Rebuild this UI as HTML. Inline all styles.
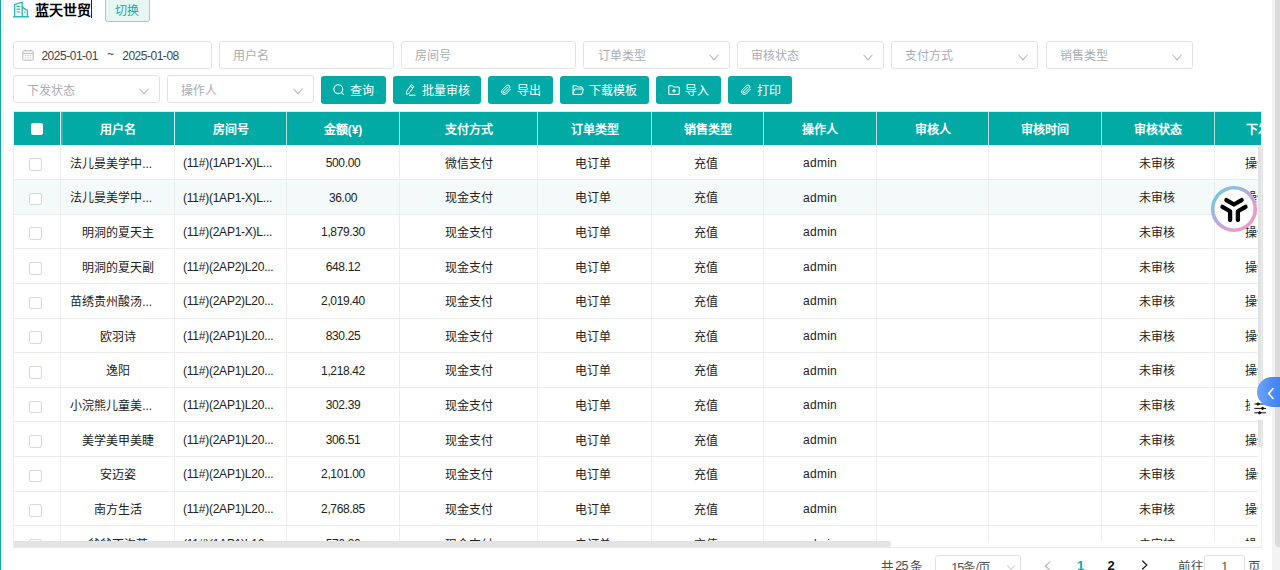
<!DOCTYPE html>
<html lang="zh-CN"><head><meta charset="utf-8"><title>订单审核</title><style>
*{box-sizing:border-box;margin:0;padding:0}
html,body{width:1280px;height:570px;overflow:hidden;background:#fff}
body{position:relative;font-family:"Liberation Sans", sans-serif;font-size:12px;color:#222}
.a{position:absolute}
.inp{position:absolute;border:1px solid #e3e3e6;border-radius:3px;background:#fff;height:27.6px}
.ph{position:absolute;left:13.2px;top:1.7px;line-height:26px;color:#a9acb3;font-size:12px;white-space:nowrap}
.chev{position:absolute;right:9.3px;top:12.2px;width:10px;height:7px}
.btn{position:absolute;top:76px;height:27.8px;background:#02aaa6;border-radius:3px;color:#fff;font-size:12px;line-height:27.8px;white-space:nowrap}
.btn svg{position:absolute}
.btn span{position:absolute;top:1.6px}
.th{position:absolute;top:113.9px;height:31px;line-height:33.7px;color:#fff;font-weight:bold;font-size:12px;text-align:center;white-space:nowrap;overflow:hidden}
.td{position:absolute;height:34.62px;line-height:34.62px;font-size:12px;text-align:center;white-space:nowrap;overflow:hidden;color:#222}
.vl{position:absolute;width:1px}
.hl{position:absolute;height:1px;background:#ececec}
.cb{position:absolute;width:12.6px;height:12.6px;border:1px solid #d5d8de;border-radius:2px;background:#fff}
</style></head><body>
<div class="a" style="left:0;top:0;width:1px;height:570px;background:#17a0ae"></div>
<div class="a" style="left:1px;top:0;width:1px;height:570px;background:#fbf9f8"></div>
<div class="a" style="left:2px;top:0;width:2px;height:570px;background:#f4f4f4"></div>
<svg class="a" style="left:13px;top:1px;width:16px;height:17px" viewBox="0 0 16 17" fill="none" stroke="#2fb9b4" stroke-width="1.4" stroke-linejoin="round" stroke-linecap="round">
<path d="M1.6 15.6V3.6L9.2 1.2V15.6"/><path d="M9.4 6.2L14.4 9.6V15.6"/><path d="M0.4 15.8H15.6"/>
<path d="M4 5.4H6.8M4 8.2H6.8M4 11H6.8" stroke-width="1.2"/><path d="M11.4 11.2H12.2" stroke-width="1"/></svg>
<div class="a" style="left:35px;top:0;height:20px;line-height:20px;font-size:14px;font-weight:bold;color:#000;white-space:nowrap">蓝天世贸</div>
<div class="a" style="left:91px;top:0;width:1px;height:18px;background:#222"></div>
<div class="a" style="left:105px;top:-6px;width:44.7px;height:27.8px;border:1px solid #86d3d0;border-radius:2.5px;background:#e6f6f5;color:#12aaa6;font-size:12px;line-height:32.6px;text-align:center">切换</div>
<div class="inp" style="left:13px;top:41.1px;width:198.8px"><svg class="a" style="left:8px;top:7px;width:12px;height:12px" viewBox="0 0 12 12" fill="none" stroke="#b9bcc3" stroke-width="1"><rect x="0.8" y="1.8" width="10.4" height="9.4" rx="0.8"/><path d="M0.8 4.4H11.2M3.4 0.6V2.6M8.6 0.6V2.6"/><path d="M2.8 6.6H9.2M2.8 8.8H9.2" stroke-dasharray="1.4 1" stroke-width="0.9"/></svg><div class="a" style="left:27.4px;top:1.3px;line-height:26.5px;font-size:12px;color:#3f434a;white-space:nowrap;letter-spacing:-0.48px">2025-01-01</div><div class="a" style="left:93px;top:0.4px;line-height:25px;font-size:12px;color:#3f434a">~</div><div class="a" style="left:108.2px;top:1.3px;line-height:26.5px;font-size:12px;color:#3f434a;white-space:nowrap;letter-spacing:-0.48px">2025-01-08</div></div>
<div class="inp" style="left:218.75px;top:41.1px;width:175.00px"><div class="ph" style="top:0.8px">用户名</div></div>
<div class="inp" style="left:401px;top:41.1px;width:175.00px"><div class="ph" style="top:0.8px">房间号</div></div>
<div class="inp" style="left:583.4px;top:41.1px;width:146.40px"><div class="ph" style="top:0.8px">订单类型</div><svg class="chev" viewBox="0 0 10 7" fill="none" stroke="#b4b8bf" stroke-width="1.1" stroke-linecap="round" stroke-linejoin="round"><path d="M0.8 1L5 5.8L9.2 1"/></svg></div>
<div class="inp" style="left:737px;top:41.1px;width:146.70px"><div class="ph" style="top:0.8px">审核状态</div><svg class="chev" viewBox="0 0 10 7" fill="none" stroke="#b4b8bf" stroke-width="1.1" stroke-linecap="round" stroke-linejoin="round"><path d="M0.8 1L5 5.8L9.2 1"/></svg></div>
<div class="inp" style="left:891px;top:41.1px;width:147.20px"><div class="ph" style="top:0.8px">支付方式</div><svg class="chev" viewBox="0 0 10 7" fill="none" stroke="#b4b8bf" stroke-width="1.1" stroke-linecap="round" stroke-linejoin="round"><path d="M0.8 1L5 5.8L9.2 1"/></svg></div>
<div class="inp" style="left:1045.7px;top:41.1px;width:146.90px"><div class="ph" style="top:0.8px">销售类型</div><svg class="chev" viewBox="0 0 10 7" fill="none" stroke="#b4b8bf" stroke-width="1.1" stroke-linecap="round" stroke-linejoin="round"><path d="M0.8 1L5 5.8L9.2 1"/></svg></div>
<div class="inp" style="left:13px;top:75.2px;width:146.50px"><div class="ph" style="top:1.7px">下发状态</div><svg class="chev" viewBox="0 0 10 7" fill="none" stroke="#b4b8bf" stroke-width="1.1" stroke-linecap="round" stroke-linejoin="round"><path d="M0.8 1L5 5.8L9.2 1"/></svg></div>
<div class="inp" style="left:167px;top:75.2px;width:146.75px"><div class="ph" style="top:1.7px">操作人</div><svg class="chev" viewBox="0 0 10 7" fill="none" stroke="#b4b8bf" stroke-width="1.1" stroke-linecap="round" stroke-linejoin="round"><path d="M0.8 1L5 5.8L9.2 1"/></svg></div>
<div class="btn" style="left:321px;width:64.80px"><svg style="left:12px;top:8px;width:12px;height:12px" viewBox="0 0 12 12" fill="none" stroke="#fff" stroke-width="1.1" stroke-linecap="round"><circle cx="5.3" cy="5.2" r="4.4"/><path d="M8.6 8.6L10.4 10.4"/></svg><span style="left:28.8px">查询</span></div>
<div class="btn" style="left:392.8px;width:88.20px"><svg style="left:11.5px;top:8px;width:12px;height:12px" viewBox="0 0 12 12" fill="none" stroke="#fff" stroke-width="1" stroke-linecap="round" stroke-linejoin="round"><path d="M7.6 1L9.8 2.6L5 9.4L2.4 10.4L2.6 7.8Z"/><path d="M6.6 2.4L8.8 4"/><path d="M5.4 11.2H11.2"/></svg><span style="left:28.8px">批量审核</span></div>
<div class="btn" style="left:488.1px;width:64.70px"><svg style="left:12px;top:8px;width:12px;height:12px" viewBox="0 0 12 12" fill="none" stroke="#fff" stroke-width="1" stroke-linecap="round" stroke-linejoin="round"><path d="M10.6 5.2L6 9.8A2.7 2.7 0 0 1 2.2 6L6.6 1.6A1.9 1.9 0 0 1 9.3 4.3L5 8.6A1 1 0 0 1 3.5 7.2L7.6 3.1"/></svg><span style="left:28.8px">导出</span></div>
<div class="btn" style="left:560.2px;width:88.80px"><svg style="left:12px;top:8px;width:12px;height:12px" viewBox="0 0 12 12" fill="none" stroke="#fff" stroke-width="1" stroke-linejoin="round"><path d="M1 10.4V1.8H4.6L5.6 3H10V5"/><path d="M1 10.4L2.6 5H11.4L9.8 10.4Z"/></svg><span style="left:28.8px">下载模板</span></div>
<div class="btn" style="left:656.1px;width:64.70px"><svg style="left:12px;top:8px;width:12px;height:12px" viewBox="0 0 12 12" fill="none" stroke="#fff" stroke-width="1" stroke-linejoin="round"><path d="M0.8 1.8H4.6L5.6 3H11.2V10.4H0.8Z"/><path d="M6 5V8.6M4.2 6.8H7.8" stroke-width="1.2"/></svg><span style="left:28.8px">导入</span></div>
<div class="btn" style="left:728px;width:64.30px"><svg style="left:12px;top:8px;width:12px;height:12px" viewBox="0 0 12 12" fill="none" stroke="#fff" stroke-width="1" stroke-linecap="round" stroke-linejoin="round"><path d="M10.6 5.2L6 9.8A2.7 2.7 0 0 1 2.2 6L6.6 1.6A1.9 1.9 0 0 1 9.3 4.3L5 8.6A1 1 0 0 1 3.5 7.2L7.6 3.1"/></svg><span style="left:28.8px">打印</span></div>
<div class="a" id="tb" style="left:0;top:0;width:1263.0px;height:548px;overflow:hidden">
<div class="a" style="left:13px;top:111px;width:1249.4px;height:1px;background:#d6efee"></div>
<div class="a" style="left:14px;top:112px;width:1248.4px;height:33.0px;background:#02aaa6"></div>
<div class="a" style="left:14px;top:179.62px;width:1244.4px;height:34.62px;background:#f4fafa"></div>
<div class="th" style="left:61px;width:113px">用户名</div>
<div class="th" style="left:175px;width:111px">房间号</div>
<div class="th" style="left:287px;width:112px">金额(¥)</div>
<div class="th" style="left:400px;width:137px">支付方式</div>
<div class="th" style="left:538px;width:113px">订单类型</div>
<div class="th" style="left:652px;width:111px">销售类型</div>
<div class="th" style="left:764px;width:112px">操作人</div>
<div class="th" style="left:877px;width:111px">审核人</div>
<div class="th" style="left:989px;width:112px">审核时间</div>
<div class="th" style="left:1102px;width:112px">审核状态</div>
<div class="th" style="left:1214.3px;width:112px">下发状态</div>
<div class="a" style="left:31px;top:123.2px;width:12.4px;height:12.2px;background:#fff;border-radius:2px"></div>
<div class="a" style="left:0;top:145.0px;width:1258px;height:396.20px;overflow:hidden">
<div class="td" style="left:70.2px;top:1.70px;width:100px;text-align:left">法儿曼美学中...</div>
<div class="td" style="left:183px;top:0.90px;width:100px;text-align:left;letter-spacing:-0.24px">(11#)(1AP1-X)L...</div>
<div class="td" style="left:287px;top:0.90px;width:112px;letter-spacing:-0.36px">500.00</div>
<div class="td" style="left:400px;top:1.70px;width:137px">微信支付</div>
<div class="td" style="left:536.7px;top:1.70px;width:113px">电订单</div>
<div class="td" style="left:650.7px;top:1.70px;width:111px">充值</div>
<div class="td" style="left:764px;top:0.90px;width:112px;letter-spacing:0.25px">admin</div>
<div class="td" style="left:1101.4px;top:1.70px;width:112px">未审核</div>
<div class="td" style="left:1213.3px;top:1.70px;width:112px">操作成功</div>
<div class="cb" style="left:29.2px;top:13.20px"></div>
<div class="hl" style="left:14px;top:34px;width:1244px"></div>
<div class="td" style="left:70.2px;top:36.32px;width:100px;text-align:left">法儿曼美学中...</div>
<div class="td" style="left:183px;top:35.52px;width:100px;text-align:left;letter-spacing:-0.24px">(11#)(1AP1-X)L...</div>
<div class="td" style="left:287px;top:35.52px;width:112px;letter-spacing:-0.36px">36.00</div>
<div class="td" style="left:400px;top:36.32px;width:137px">现金支付</div>
<div class="td" style="left:536.7px;top:36.32px;width:113px">电订单</div>
<div class="td" style="left:650.7px;top:36.32px;width:111px">充值</div>
<div class="td" style="left:764px;top:35.52px;width:112px;letter-spacing:0.25px">admin</div>
<div class="td" style="left:1101.4px;top:36.32px;width:112px">未审核</div>
<div class="td" style="left:1213.3px;top:36.32px;width:112px">操作成功</div>
<div class="cb" style="left:29.2px;top:47.82px"></div>
<div class="hl" style="left:14px;top:69px;width:1244px"></div>
<div class="td" style="left:61px;top:70.94px;width:113px">明洞的夏天主</div>
<div class="td" style="left:183px;top:70.14px;width:100px;text-align:left;letter-spacing:-0.24px">(11#)(2AP1-X)L...</div>
<div class="td" style="left:287px;top:70.14px;width:112px;letter-spacing:-0.36px">1,879.30</div>
<div class="td" style="left:400px;top:70.94px;width:137px">现金支付</div>
<div class="td" style="left:536.7px;top:70.94px;width:113px">电订单</div>
<div class="td" style="left:650.7px;top:70.94px;width:111px">充值</div>
<div class="td" style="left:764px;top:70.14px;width:112px;letter-spacing:0.25px">admin</div>
<div class="td" style="left:1101.4px;top:70.94px;width:112px">未审核</div>
<div class="td" style="left:1213.3px;top:70.94px;width:112px">操作成功</div>
<div class="cb" style="left:29.2px;top:82.44px"></div>
<div class="hl" style="left:14px;top:103px;width:1244px"></div>
<div class="td" style="left:61px;top:105.56px;width:113px">明洞的夏天副</div>
<div class="td" style="left:183px;top:104.76px;width:100px;text-align:left;letter-spacing:-0.24px">(11#)(2AP2)L20...</div>
<div class="td" style="left:287px;top:104.76px;width:112px;letter-spacing:-0.36px">648.12</div>
<div class="td" style="left:400px;top:105.56px;width:137px">现金支付</div>
<div class="td" style="left:536.7px;top:105.56px;width:113px">电订单</div>
<div class="td" style="left:650.7px;top:105.56px;width:111px">充值</div>
<div class="td" style="left:764px;top:104.76px;width:112px;letter-spacing:0.25px">admin</div>
<div class="td" style="left:1101.4px;top:105.56px;width:112px">未审核</div>
<div class="td" style="left:1213.3px;top:105.56px;width:112px">操作成功</div>
<div class="cb" style="left:29.2px;top:117.06px"></div>
<div class="hl" style="left:14px;top:138px;width:1244px"></div>
<div class="td" style="left:70.2px;top:140.18px;width:100px;text-align:left">苗绣贵州酸汤...</div>
<div class="td" style="left:183px;top:139.38px;width:100px;text-align:left;letter-spacing:-0.24px">(11#)(2AP2)L20...</div>
<div class="td" style="left:287px;top:139.38px;width:112px;letter-spacing:-0.36px">2,019.40</div>
<div class="td" style="left:400px;top:140.18px;width:137px">现金支付</div>
<div class="td" style="left:536.7px;top:140.18px;width:113px">电订单</div>
<div class="td" style="left:650.7px;top:140.18px;width:111px">充值</div>
<div class="td" style="left:764px;top:139.38px;width:112px;letter-spacing:0.25px">admin</div>
<div class="td" style="left:1101.4px;top:140.18px;width:112px">未审核</div>
<div class="td" style="left:1213.3px;top:140.18px;width:112px">操作成功</div>
<div class="cb" style="left:29.2px;top:151.68px"></div>
<div class="hl" style="left:14px;top:173px;width:1244px"></div>
<div class="td" style="left:61px;top:174.80px;width:113px">欧羽诗</div>
<div class="td" style="left:183px;top:174.00px;width:100px;text-align:left;letter-spacing:-0.24px">(11#)(2AP1)L20...</div>
<div class="td" style="left:287px;top:174.00px;width:112px;letter-spacing:-0.36px">830.25</div>
<div class="td" style="left:400px;top:174.80px;width:137px">现金支付</div>
<div class="td" style="left:536.7px;top:174.80px;width:113px">电订单</div>
<div class="td" style="left:650.7px;top:174.80px;width:111px">充值</div>
<div class="td" style="left:764px;top:174.00px;width:112px;letter-spacing:0.25px">admin</div>
<div class="td" style="left:1101.4px;top:174.80px;width:112px">未审核</div>
<div class="td" style="left:1213.3px;top:174.80px;width:112px">操作成功</div>
<div class="cb" style="left:29.2px;top:186.30px"></div>
<div class="hl" style="left:14px;top:207px;width:1244px"></div>
<div class="td" style="left:61px;top:209.42px;width:113px">逸阳</div>
<div class="td" style="left:183px;top:208.62px;width:100px;text-align:left;letter-spacing:-0.24px">(11#)(2AP1)L20...</div>
<div class="td" style="left:287px;top:208.62px;width:112px;letter-spacing:-0.36px">1,218.42</div>
<div class="td" style="left:400px;top:209.42px;width:137px">现金支付</div>
<div class="td" style="left:536.7px;top:209.42px;width:113px">电订单</div>
<div class="td" style="left:650.7px;top:209.42px;width:111px">充值</div>
<div class="td" style="left:764px;top:208.62px;width:112px;letter-spacing:0.25px">admin</div>
<div class="td" style="left:1101.4px;top:209.42px;width:112px">未审核</div>
<div class="td" style="left:1213.3px;top:209.42px;width:112px">操作成功</div>
<div class="cb" style="left:29.2px;top:220.92px"></div>
<div class="hl" style="left:14px;top:242px;width:1244px"></div>
<div class="td" style="left:70.2px;top:244.04px;width:100px;text-align:left">小浣熊儿童美...</div>
<div class="td" style="left:183px;top:243.24px;width:100px;text-align:left;letter-spacing:-0.24px">(11#)(2AP1)L20...</div>
<div class="td" style="left:287px;top:243.24px;width:112px;letter-spacing:-0.36px">302.39</div>
<div class="td" style="left:400px;top:244.04px;width:137px">现金支付</div>
<div class="td" style="left:536.7px;top:244.04px;width:113px">电订单</div>
<div class="td" style="left:650.7px;top:244.04px;width:111px">充值</div>
<div class="td" style="left:764px;top:243.24px;width:112px;letter-spacing:0.25px">admin</div>
<div class="td" style="left:1101.4px;top:244.04px;width:112px">未审核</div>
<div class="td" style="left:1213.3px;top:244.04px;width:112px">操作成功</div>
<div class="cb" style="left:29.2px;top:255.54px"></div>
<div class="hl" style="left:14px;top:276px;width:1244px"></div>
<div class="td" style="left:61px;top:278.66px;width:113px">美学美甲美睫</div>
<div class="td" style="left:183px;top:277.86px;width:100px;text-align:left;letter-spacing:-0.24px">(11#)(2AP1)L20...</div>
<div class="td" style="left:287px;top:277.86px;width:112px;letter-spacing:-0.36px">306.51</div>
<div class="td" style="left:400px;top:278.66px;width:137px">现金支付</div>
<div class="td" style="left:536.7px;top:278.66px;width:113px">电订单</div>
<div class="td" style="left:650.7px;top:278.66px;width:111px">充值</div>
<div class="td" style="left:764px;top:277.86px;width:112px;letter-spacing:0.25px">admin</div>
<div class="td" style="left:1101.4px;top:278.66px;width:112px">未审核</div>
<div class="td" style="left:1213.3px;top:278.66px;width:112px">操作成功</div>
<div class="cb" style="left:29.2px;top:290.16px"></div>
<div class="hl" style="left:14px;top:311px;width:1244px"></div>
<div class="td" style="left:61px;top:313.28px;width:113px">安迈姿</div>
<div class="td" style="left:183px;top:312.48px;width:100px;text-align:left;letter-spacing:-0.24px">(11#)(2AP1)L20...</div>
<div class="td" style="left:287px;top:312.48px;width:112px;letter-spacing:-0.36px">2,101.00</div>
<div class="td" style="left:400px;top:313.28px;width:137px">现金支付</div>
<div class="td" style="left:536.7px;top:313.28px;width:113px">电订单</div>
<div class="td" style="left:650.7px;top:313.28px;width:111px">充值</div>
<div class="td" style="left:764px;top:312.48px;width:112px;letter-spacing:0.25px">admin</div>
<div class="td" style="left:1101.4px;top:313.28px;width:112px">未审核</div>
<div class="td" style="left:1213.3px;top:313.28px;width:112px">操作成功</div>
<div class="cb" style="left:29.2px;top:324.78px"></div>
<div class="hl" style="left:14px;top:346px;width:1244px"></div>
<div class="td" style="left:61px;top:347.90px;width:113px">南方生活</div>
<div class="td" style="left:183px;top:347.10px;width:100px;text-align:left;letter-spacing:-0.24px">(11#)(2AP1)L20...</div>
<div class="td" style="left:287px;top:347.10px;width:112px;letter-spacing:-0.36px">2,768.85</div>
<div class="td" style="left:400px;top:347.90px;width:137px">现金支付</div>
<div class="td" style="left:536.7px;top:347.90px;width:113px">电订单</div>
<div class="td" style="left:650.7px;top:347.90px;width:111px">充值</div>
<div class="td" style="left:764px;top:347.10px;width:112px;letter-spacing:0.25px">admin</div>
<div class="td" style="left:1101.4px;top:347.90px;width:112px">未审核</div>
<div class="td" style="left:1213.3px;top:347.90px;width:112px">操作成功</div>
<div class="cb" style="left:29.2px;top:359.40px"></div>
<div class="hl" style="left:14px;top:380px;width:1244px"></div>
<div class="td" style="left:61px;top:382.52px;width:113px">爸爸不泡茶</div>
<div class="td" style="left:183px;top:381.72px;width:100px;text-align:left;letter-spacing:-0.24px">(11#)(1AP1)L10...</div>
<div class="td" style="left:287px;top:381.72px;width:112px;letter-spacing:-0.36px">576.20</div>
<div class="td" style="left:400px;top:382.52px;width:137px">现金支付</div>
<div class="td" style="left:536.7px;top:382.52px;width:113px">电订单</div>
<div class="td" style="left:650.7px;top:382.52px;width:111px">充值</div>
<div class="td" style="left:764px;top:381.72px;width:112px;letter-spacing:0.25px">admin</div>
<div class="td" style="left:1101.4px;top:382.52px;width:112px">未审核</div>
<div class="td" style="left:1213.3px;top:382.52px;width:112px">操作成功</div>
<div class="cb" style="left:29.2px;top:394.02px"></div>
<div class="hl" style="left:14px;top:415px;width:1244px"></div>
</div>
<div class="vl" style="left:60px;top:112px;height:33.0px;background:#dfe8e8"></div>
<div class="vl" style="left:60px;top:145.0px;height:396.20px;background:#ededee"></div>
<div class="vl" style="left:174px;top:112px;height:33.0px;background:#dfe8e8"></div>
<div class="vl" style="left:174px;top:145.0px;height:396.20px;background:#ededee"></div>
<div class="vl" style="left:286px;top:112px;height:33.0px;background:#b8dfdd"></div>
<div class="vl" style="left:286px;top:145.0px;height:396.20px;background:#ededee"></div>
<div class="vl" style="left:399px;top:112px;height:33.0px;background:#b8dfdd"></div>
<div class="vl" style="left:399px;top:145.0px;height:396.20px;background:#ededee"></div>
<div class="vl" style="left:537px;top:112px;height:33.0px;background:#b8dfdd"></div>
<div class="vl" style="left:537px;top:145.0px;height:396.20px;background:#ededee"></div>
<div class="vl" style="left:651px;top:112px;height:33.0px;background:#b8dfdd"></div>
<div class="vl" style="left:651px;top:145.0px;height:396.20px;background:#ededee"></div>
<div class="vl" style="left:763px;top:112px;height:33.0px;background:#b8dfdd"></div>
<div class="vl" style="left:763px;top:145.0px;height:396.20px;background:#ededee"></div>
<div class="vl" style="left:876px;top:112px;height:33.0px;background:#b8dfdd"></div>
<div class="vl" style="left:876px;top:145.0px;height:396.20px;background:#ededee"></div>
<div class="vl" style="left:988px;top:112px;height:33.0px;background:#b8dfdd"></div>
<div class="vl" style="left:988px;top:145.0px;height:396.20px;background:#ededee"></div>
<div class="vl" style="left:1101px;top:112px;height:33.0px;background:#b8dfdd"></div>
<div class="vl" style="left:1101px;top:145.0px;height:396.20px;background:#ededee"></div>
<div class="vl" style="left:1214px;top:112px;height:33.0px;background:#b8dfdd"></div>
<div class="vl" style="left:1214px;top:145.0px;height:396.20px;background:#ededee"></div>
<div class="a" style="left:61px;top:112px;width:2px;height:33.0px;background:rgba(255,255,255,.18)"></div>
<div class="a" style="left:1258px;top:146px;width:4.6px;height:300.5px;background:#e2e2e2;border-radius:2px"></div>
<div class="a" style="left:13px;top:541.2px;width:1249px;height:6.4px;background:#fff"></div>
<div class="a" style="left:13px;top:541.2px;width:877.6px;height:6px;background:#e3e3e3;border-radius:0 3px 3px 0"></div>
<div class="a" style="left:13px;top:111px;width:1249.4px;height:437px;border:1px solid #f1eeee;border-top-color:transparent;border-bottom-color:#e9e9e9;border-right-color:#ececec"></div>
</div>
<div class="a" style="left:880.8px;top:553.8000000000001px;line-height:27px;font-size:12.5px;color:#4a4a4a;white-space:nowrap">共</div>
<div class="a" style="left:895.3px;top:553.0px;line-height:27px;font-size:12.5px;color:#4a4a4a;white-space:nowrap;letter-spacing:-0.7px">25</div>
<div class="a" style="left:910.4px;top:553.8000000000001px;line-height:27px;font-size:12.5px;color:#4a4a4a;white-space:nowrap">条</div>
<div class="a" style="left:935.4px;top:554.6px;width:85.6px;height:28px;border:1px solid #e0e1e4;border-radius:3px"><div class="a" style="left:14.8px;top:0;line-height:25.4px;font-size:12.5px;color:#555;white-space:nowrap;letter-spacing:-0.85px">15条/页</div><svg class="a" style="left:70.6px;top:9px;width:8px;height:6px" viewBox="0 0 8 6" fill="none" stroke="#b9bcc3" stroke-width="1" stroke-linecap="round"><path d="M0.6 0.8L4 4.6L7.4 0.8"/></svg></div>
<svg class="a" style="left:1043.6px;top:561.0px;width:7px;height:10px" viewBox="0 0 7 10" fill="none" stroke="#b5b8be" stroke-width="1.2" stroke-linecap="round" stroke-linejoin="round"><path d="M5.6 1L1.4 5L5.6 9"/></svg>
<div class="a" style="left:1070.6px;top:552.2px;width:20px;text-align:center;line-height:27px;font-size:13px;font-weight:bold;color:#10aaa6">1</div>
<div class="a" style="left:1101px;top:552.2px;width:20px;text-align:center;line-height:27px;font-size:13px;font-weight:bold;color:#111">2</div>
<svg class="a" style="left:1141.4px;top:560.2px;width:7px;height:10px" viewBox="0 0 7 10" fill="none" stroke="#222" stroke-width="1.3" stroke-linecap="round" stroke-linejoin="round"><path d="M1.6 1L5.8 5L1.6 9"/></svg>
<div class="a" style="left:1178px;top:554.0px;line-height:27px;font-size:12.5px;color:#4a4a4a;white-space:nowrap">前往</div>
<div class="a" style="left:1204.4px;top:554.6px;width:40.6px;height:28px;border:1px solid #e0e1e4;border-radius:3px;text-align:center;line-height:23.4px;font-size:12.5px;color:#555">1</div>
<div class="a" style="left:1247.8px;top:553.6px;line-height:27px;font-size:12.5px;color:#4a4a4a;white-space:nowrap">页</div>
<svg class="a" style="left:1209px;top:184px;width:50px;height:50px" viewBox="-25 -25 50 50">
<defs><linearGradient id="rg" x1="0.1" y1="0.1" x2="0.9" y2="0.9"><stop offset="0" stop-color="#74c8e2"/><stop offset="0.5" stop-color="#b9a8e0"/><stop offset="0.8" stop-color="#e99ccb"/><stop offset="1" stop-color="#e6a0d0"/></linearGradient></defs>
<circle cx="0" cy="0" r="21.3" fill="#fff" fill-opacity="0.92" stroke="url(#rg)" stroke-width="3.6"/>
<g fill="none" stroke="#000" stroke-width="4.3" stroke-linecap="round" stroke-linejoin="round"><path d="M-7.6 -8.9L0 -4.5L7.6 -8.9"/><path d="M-7.6 -8.9L0 -4.5L7.6 -8.9" transform="rotate(120)"/><path d="M-7.6 -8.9L0 -4.5L7.6 -8.9" transform="rotate(240)"/></g>
</svg>
<div class="a" style="left:1250px;top:396px;width:19px;height:24px;background:#fff"></div>
<svg class="a" style="left:1254px;top:402px;width:13px;height:13px" viewBox="0 0 13 13" fill="none" stroke="#111" stroke-width="1" stroke-linecap="round">
<path d="M0.8 2H11.6M0.8 6.4H11.6M0.8 10.8H11.6"/><circle cx="4" cy="2" r="1.1" fill="#111"/><circle cx="8.6" cy="6.4" r="1.1" fill="#111"/><circle cx="5.6" cy="10.8" r="1.1" fill="#111"/></svg>
<div class="a" style="left:1272px;top:0;width:8px;height:570px;background:#f3f3f3"></div>
<div class="a" style="left:1275px;top:-6px;width:8px;height:552.5px;background:#dcdcdc;border-radius:4px"></div>
<div class="a" style="left:1257px;top:376.6px;width:30px;height:30.4px;border-radius:15.2px 0 0 15.2px;background:linear-gradient(90deg,#6ea4fa 0%,#4a88f6 55%,#3d7ef4 100%)"></div>
<svg class="a" style="left:1266.6px;top:386.6px;width:8px;height:13px" viewBox="0 0 8 13" fill="none" stroke="#fff" stroke-width="1.6" stroke-linecap="round" stroke-linejoin="round"><path d="M6 1.5L1.7 6.5L6 11.5"/></svg>
</body></html>
